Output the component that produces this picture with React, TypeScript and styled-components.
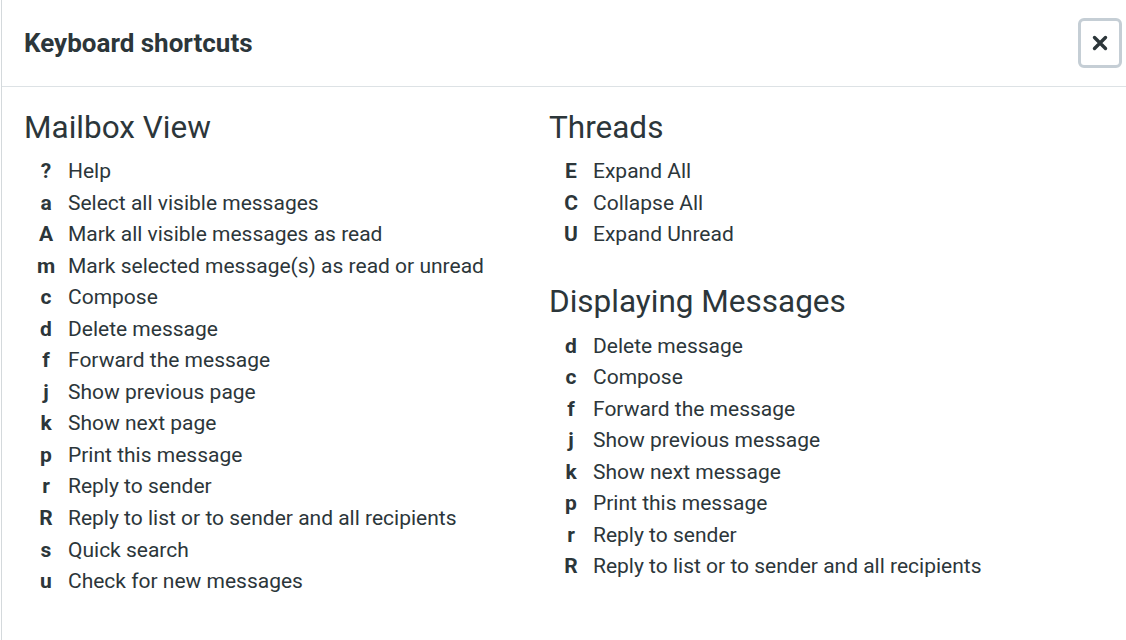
import React from "react";
import styled, { createGlobalStyle } from "styled-components";

const Global = createGlobalStyle`
  html, body { margin: 0; padding: 0; background: #fff; }
  body { font-family: Roboto, "Noto Sans", "Liberation Sans", sans-serif; color: #2c363a; }
`;

const Dialog = styled.div`
  box-sizing: border-box;
  width: 1126px;
  height: 640px;
  border-left: 1px solid #d4d9dc;
  margin-left: 1px;
  overflow: hidden;
`;

const Header = styled.header`
  box-sizing: border-box;
  height: 87px;
  border-bottom: 1px solid #dde2e5;
  display: flex;
  align-items: center;
  justify-content: space-between;
  padding: 0 5px 0 22px;
`;

const Title = styled.h1`
  margin: 0;
  font-size: 26px;
  font-weight: 700;
  color: #2c363a;
`;

const CloseButton = styled.button`
  box-sizing: border-box;
  width: 44px;
  height: 50px;
  border: 3px solid #c5ced5;
  border-radius: 6px;
  background: #fff;
  display: flex;
  align-items: center;
  justify-content: center;
  padding: 0;
  cursor: pointer;
`;

const Body = styled.div`
  display: grid;
  grid-template-columns: 525px 1fr;
  padding: 22px 0 0 22px;
`;

const Column = styled.section`
  display: flex;
  flex-direction: column;
`;

const Heading = styled.h2<{ $spaced?: boolean }>`
  margin: ${(p) => (p.$spaced ? "32px 0 10px" : "0 0 9px")};
  font-size: 31.5px;
  font-weight: 400;
  line-height: 38px;
  color: #2c363a;
`;

const List = styled.ul`
  list-style: none;
  margin: 0;
  padding: 0 0 0 10px;
`;

const Item = styled.li`
  display: flex;
  align-items: baseline;
  font-size: 21px;
  line-height: 31.55px;
`;

const Key = styled.kbd`
  font-family: inherit;
  font-weight: 700;
  width: 24px;
  text-align: center;
  margin-right: 10px;
  flex: none;
`;

const Desc = styled.span``;

type Shortcut = [string, string];

const mailbox: Shortcut[] = [
  ["?", "Help"],
  ["a", "Select all visible messages"],
  ["A", "Mark all visible messages as read"],
  ["m", "Mark selected message(s) as read or unread"],
  ["c", "Compose"],
  ["d", "Delete message"],
  ["f", "Forward the message"],
  ["j", "Show previous page"],
  ["k", "Show next page"],
  ["p", "Print this message"],
  ["r", "Reply to sender"],
  ["R", "Reply to list or to sender and all recipients"],
  ["s", "Quick search"],
  ["u", "Check for new messages"],
];

const threads: Shortcut[] = [
  ["E", "Expand All"],
  ["C", "Collapse All"],
  ["U", "Expand Unread"],
];

const displaying: Shortcut[] = [
  ["d", "Delete message"],
  ["c", "Compose"],
  ["f", "Forward the message"],
  ["j", "Show previous message"],
  ["k", "Show next message"],
  ["p", "Print this message"],
  ["r", "Reply to sender"],
  ["R", "Reply to list or to sender and all recipients"],
];

const Shortcuts = ({ items }: { items: Shortcut[] }) => (
  <List>
    {items.map(([k, d]) => (
      <Item key={k + d}>
        <Key>{k}</Key>
        <Desc>{d}</Desc>
      </Item>
    ))}
  </List>
);

export default function App() {
  return (
    <>
      <Global />
      <Dialog>
        <Header>
          <Title>Keyboard shortcuts</Title>
          <CloseButton aria-label="Close">
            <svg width="16" height="16" viewBox="0 0 16 16">
              <path d="M2.5 2.5 L13.5 13.5 M13.5 2.5 L2.5 13.5" stroke="#2c363a" strokeWidth="3.4" strokeLinecap="round" />
            </svg>
          </CloseButton>
        </Header>
        <Body>
          <Column>
            <Heading>Mailbox View</Heading>
            <Shortcuts items={mailbox} />
          </Column>
          <Column>
            <Heading>Threads</Heading>
            <Shortcuts items={threads} />
            <Heading $spaced>Displaying Messages</Heading>
            <Shortcuts items={displaying} />
          </Column>
        </Body>
      </Dialog>
    </>
  );
}
